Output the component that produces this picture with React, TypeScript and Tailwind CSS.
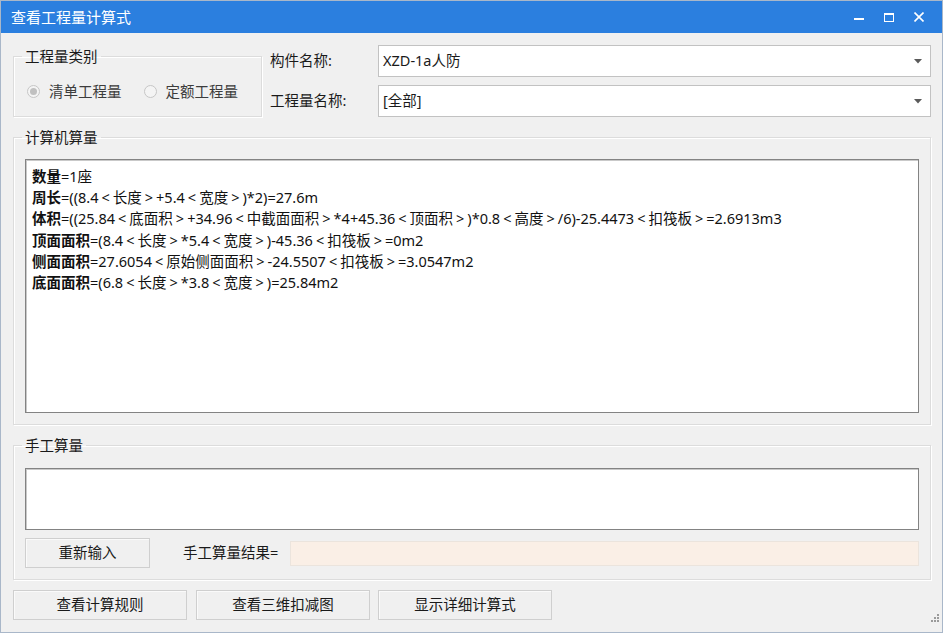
import React from 'react';

const FONT = { fontFamily: '"Noto Sans", "Noto Sans CJK SC", sans-serif' };

const LINES: [string, string][] = [
  ['数量', '=1座'],
  ['周长', '=((8.4<长度>+5.4<宽度>)*2)=27.6m'],
  ['体积', '=((25.84<底面积>+34.96<中截面面积>*4+45.36<顶面积>)*0.8<高度>/6)-25.4473<扣筏板>=2.6913m3'],
  ['顶面面积', '=(8.4<长度>*5.4<宽度>)-45.36<扣筏板>=0m2'],
  ['侧面面积', '=27.6054<原始侧面面积>-24.5507<扣筏板>=3.0547m2'],
  ['底面面积', '=(6.8<长度>*3.8<宽度>)=25.84m2'],
];

const groupCls =
  'border border-[#dcdcdc] shadow-[inset_1px_1px_0_#ffffff,1px_1px_0_#ffffff] m-0 p-0 min-w-0';
const legendCls = 'ml-[8px] px-[3px] h-[20px] leading-[20px] text-[14.5px] text-[#1a1a1a]';
const btnCls =
  'h-[30px] border border-[#cfcfcf] bg-[#f0f0f0] shadow-[inset_1px_1px_0_#fafafa] text-[14.5px] text-[#1a1a1a] flex items-center justify-center';

// YaHei draws the angle brackets with wide side bearings
function Formula({ text }: { text: string }) {
  const parts = text.split(/([<>])/);
  return (
    <>
      {parts.map((p, i) =>
        p === '<' || p === '>' ? (
          <span key={i} className="mx-[3px]">{p}</span>
        ) : (
          <span key={i}>{p}</span>
        )
      )}
    </>
  );
}

function Combo({ value }: { value: string }) {
  return (
    <div className="flex-1 h-[32px] bg-white border border-[#c2c2c2] flex items-center pl-[4px] pr-[8px]">
      <span className="flex-1 text-[14.5px] text-[#1a1a1a]">{value}</span>
      <svg width="8" height="5" viewBox="0 0 8 5">
        <path d="M0 0h8L4 4.5z" fill="#5a5a5a" />
      </svg>
    </div>
  );
}

function Radio({ checked, label }: { checked?: boolean; label: string }) {
  return (
    <div className="flex items-center gap-[9px]">
      <span className="w-[13px] h-[13px] rounded-full border border-[#c6c6c6] bg-[#f4f4f4] flex items-center justify-center">
        {checked && <span className="w-[7px] h-[7px] rounded-full bg-[#c0c0c0]" />}
      </span>
      <span className="text-[14.5px] text-[#3c3c3c]">{label}</span>
    </div>
  );
}

export default function App() {
  return (
    <div
      lang="zh-CN"
      className="w-[943px] h-[633px] bg-[#f0f0f0] border border-[#a9b7c9] flex flex-col overflow-hidden"
      style={FONT}
    >
      {/* Title bar */}
      <div className="h-[32px] bg-[#2b7fdf] flex items-center shrink-0">
        <span className="pl-[10px] text-white text-[15px] flex-1">查看工程量计算式</span>
        <div className="flex items-center h-full">
          <div className="w-[30px] flex justify-center">
            <div className="w-[10px] h-[2px] bg-white mt-[4px]" />
          </div>
          <div className="w-[30px] flex justify-center">
            <div className="w-[10px] h-[9px] border border-white border-t-2" />
          </div>
          <div className="w-[38px] flex justify-center pr-[8px]">
            <svg width="10" height="10" viewBox="0 0 10 10">
              <path d="M0.5 0.5l9 9M9.5 0.5l-9 9" stroke="white" strokeWidth="1.6" />
            </svg>
          </div>
        </div>
      </div>

      {/* Body */}
      <div className="flex flex-col pl-[12px] pr-[11px] pt-[12px]">
        {/* Top row */}
        <div className="flex">
          <fieldset className={`${groupCls} w-[249px] h-[71px] mt-[1px]`}>
            <legend className={legendCls}>工程量类别</legend>
            <div className="flex items-center gap-[22px] pl-[13px] pt-[15px]">
              <Radio checked label="清单工程量" />
              <Radio label="定额工程量" />
            </div>
          </fieldset>
          <div className="flex-1 flex flex-col gap-[8px] ml-[8px]">
            <div className="flex items-center">
              <span className="w-[108px] text-[14.5px] text-[#1a1a1a]">构件名称:</span>
              <Combo value="XZD-1a人防" />
            </div>
            <div className="flex items-center">
              <span className="w-[108px] text-[14.5px] text-[#1a1a1a]">工程量名称:</span>
              <Combo value="[全部]" />
            </div>
          </div>
        </div>

        {/* 计算机算量 */}
        <fieldset className={`${groupCls} mt-[10px] h-[298px] flex flex-col`}>
          <legend className={legendCls}>计算机算量</legend>
          <div className="px-[11px] pt-[12px]">
            <div className="h-[254px] bg-white border border-[#838383] shadow-[inset_1px_1px_0_#c9c9c9] pl-[6px] pt-[6px]">
              {LINES.map(([k, v]) => (
                <div key={k} className="text-[14.5px] leading-[21.2px] text-[#111] whitespace-nowrap">
                  <span className="font-bold">{k}</span>
                  <Formula text={v} />
                </div>
              ))}
            </div>
          </div>
        </fieldset>

        {/* 手工算量 */}
        <fieldset className={`${groupCls} mt-[10px] h-[145px]`}>
          <legend className={legendCls}>手工算量</legend>
          <div className="px-[11px] pt-[13px] flex flex-col">
            <div className="h-[62px] bg-white border border-[#838383] shadow-[inset_1px_1px_0_#c9c9c9]" />
            <div className="flex items-center mt-[8px]">
              <div className={`${btnCls} w-[125px]`}>重新输入</div>
              <span className="ml-[33px] w-[107px] text-[14.5px] text-[#1a1a1a]">手工算量结果=</span>
              <div className="flex-1 h-[25px] bg-[#faefe6] border border-[#ebe4dd]" />
            </div>
          </div>
        </fieldset>

        {/* Bottom buttons */}
        <div className="flex mt-[10px] gap-[9px]">
          <div className={`${btnCls} w-[174px]`}>查看计算规则</div>
          <div className={`${btnCls} w-[174px]`}>查看三维扣减图</div>
          <div className={`${btnCls} w-[174px] -ml-[1px]`}>显示详细计算式</div>
          <div className="flex-1 flex justify-end items-end pt-[18px]">
            <svg width="8" height="8" viewBox="0 0 8 8" className="mr-[-8px] mb-[-2px]">
              <rect x="6" y="0" width="2" height="2" fill="#9a9a9a" />
              <rect x="3" y="3" width="2" height="2" fill="#9a9a9a" />
              <rect x="6" y="3" width="2" height="2" fill="#9a9a9a" />
              <rect x="0" y="6" width="2" height="2" fill="#9a9a9a" />
              <rect x="3" y="6" width="2" height="2" fill="#9a9a9a" />
              <rect x="6" y="6" width="2" height="2" fill="#9a9a9a" />
            </svg>
          </div>
        </div>
      </div>
    </div>
  );
}
